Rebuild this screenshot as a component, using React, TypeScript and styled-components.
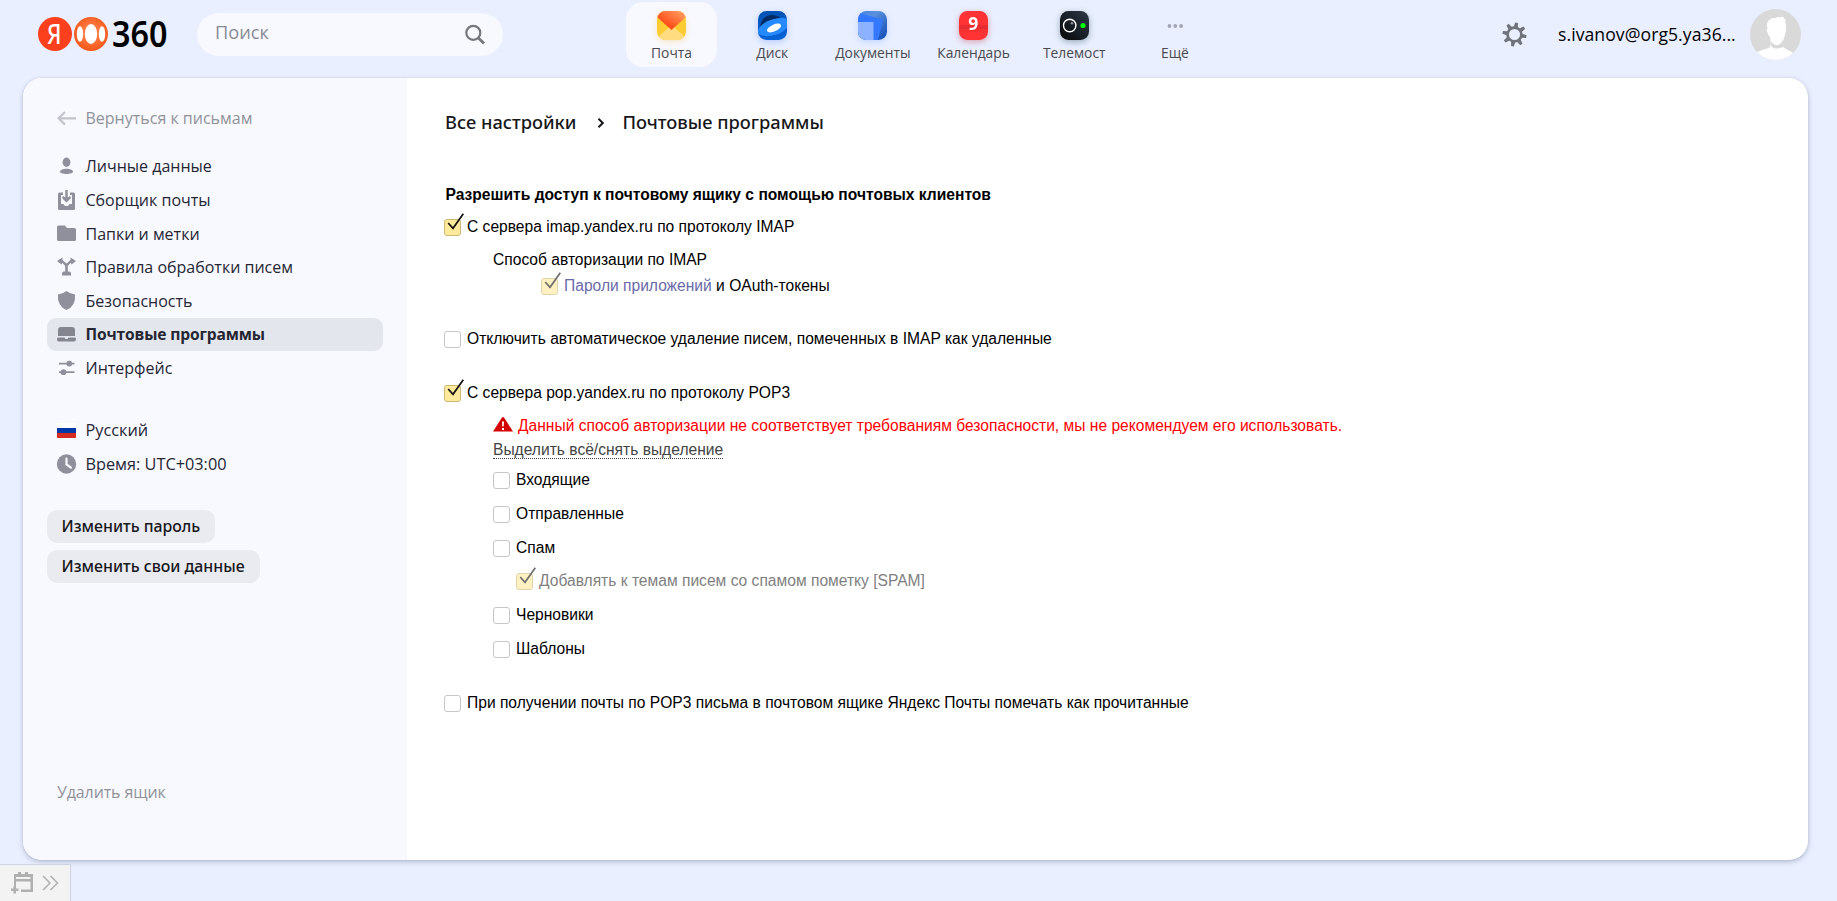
import React from 'react';
import styled, { createGlobalStyle, css } from 'styled-components';

const Global = createGlobalStyle`
  *, *::before, *::after { box-sizing: border-box; }
  html, body { margin: 0; padding: 0; background: #e9effe; }
  body { font-family: 'Open Sans', 'Noto Sans', sans-serif; color: #000; overflow: hidden; }
  svg { display: block; overflow: visible; flex: none; }
`;

const Page = styled.div`
  position: relative;
  height: 901px;
  width: 100%;
  display: flex;
  flex-direction: column;
`;

/* ---------- header ---------- */
const Header = styled.header`
  height: 78px;
  flex: none;
  display: flex;
  align-items: flex-start;
`;

const Logo = styled.div`
  display: flex;
  align-items: center;
  margin: 13px 0 0 38px;
  width: 159px;
  height: 42px;
`;

const SearchBox = styled.div`
  width: 306px;
  height: 43px;
  margin-top: 13px;
  padding: 0 18px 0 18px;
  border-radius: 22px;
  background: #f8f9ff;
  display: flex;
  align-items: center;
  justify-content: space-between;
  color: #8a8c95;
  font-size: 18.2px;
  line-height: 24px;
`;

const SearchHint = styled.span`
  margin-top: -5px;
`;

const Services = styled.nav`
  display: flex;
  gap: 9.7px;
  margin: 2px 0 0 123px;
`;

const Service = styled.a<{ $active?: boolean }>`
  width: 91px;
  height: 65px;
  padding-top: 8.5px;
  border-radius: 17px;
  display: flex;
  flex-direction: column;
  align-items: center;
  background: ${p => (p.$active ? '#f8f9ff' : 'transparent')};
  color: #4a4a4c;
  font-size: 13.8px;
  line-height: 18px;
  white-space: nowrap;
`;

const ServiceIcon = styled.span<{ $glow: string }>`
  height: 29px;
  margin-bottom: 4px;
  filter: drop-shadow(0 2px 3px ${p => p.$glow});
`;

const Account = styled.div`
  margin-left: auto;
  margin-right: 36px;
  height: 68px;
  display: flex;
  align-items: center;
`;

const Email = styled.span`
  margin: -1px 15px 0 31px;
  width: 177px;
  font-size: 17.6px;
  line-height: 24px;
  letter-spacing: 0.06px;
  white-space: nowrap;
`;

/* ---------- card ---------- */
const Card = styled.div`
  height: 782px;
  flex: none;
  margin: 0 29px 0 23px;
  border-radius: 19px;
  overflow: hidden;
  display: flex;
  background: #fff;
  box-shadow: 0 2px 5px rgba(60, 70, 110, 0.3), 0 0 2px rgba(60, 70, 110, 0.12);
`;

const Sidebar = styled.aside`
  width: 384px;
  flex: none;
  padding: 23.3px 24px 0;
  background: #f8f9ff;
  display: flex;
  flex-direction: column;
`;

const SideItem = styled.a<{ $active?: boolean; $muted?: boolean }>`
  height: 33.6px;
  flex: none;
  padding-left: 10px;
  display: flex;
  align-items: center;
  gap: 9.5px;
  border-radius: 9px;
  font-size: 16px;
  line-height: 20px;
  white-space: nowrap;
  color: ${p => (p.$muted ? '#919298' : '#262633')};
  ${p =>
    p.$active &&
    css`
      height: 33px;
      margin-bottom: 0.6px;
      background: #e3e6ed;
      font-weight: 700;
      letter-spacing: -0.01em;
      font-size: 15.6px;
    `}
`;

const SideGroup = styled.div<{ $gap: number }>`
  margin-top: ${p => p.$gap}px;
  display: flex;
  flex-direction: column;
`;

const Locale = styled(SideGroup)`
  font-size: 16.3px;

  ${SideItem} { font-size: inherit; }
`;

const Buttons = styled.div`
  margin-top: 29.3px;
  display: flex;
  flex-direction: column;
  align-items: flex-start;
  gap: 7px;
`;

const Button = styled.button`
  height: 33px;
  padding: 0 15px 0 14.5px;
  border: 0;
  border-radius: 10px;
  background: #eaebf1;
  color: #17171c;
  font: 500 15.9px/20px 'Noto Sans', sans-serif;
  white-space: nowrap;
`;

const SideFooter = styled.div`
  margin-top: auto;
  margin-bottom: 51px;
  letter-spacing: -0.12px;
`;

/* ---------- content ---------- */
const Content = styled.main`
  flex: 1;
  padding: 30px 0 0 37px;
  font: 15.6px/20px 'Liberation Sans', Arial, sans-serif;
`;

const Crumbs = styled.div`
  height: 28px;
  padding-left: 1px;
  display: flex;
  align-items: center;
  color: #17171a;
  font: 500 18.3px/28px 'Noto Sans', sans-serif;
  white-space: nowrap;

  svg { margin: 1px 17px 0 21px; }
`;

const Heading = styled.h2`
  margin: 49px 0 12px 1.5px;
  font-size: 15.6px;
  line-height: 20px;
  font-weight: 700;
`;

const Nested = styled.div<{ $top: number }>`
  margin: ${p => p.$top}px 0 0 49px;
  display: flex;
  flex-direction: column;
`;

const Line = styled.div<{ $top?: number; $indent?: number; $dim?: boolean; $alert?: boolean }>`
  height: 20px;
  margin-top: ${p => p.$top ?? 0}px;
  margin-left: ${p => p.$indent ?? 0}px;
  display: flex;
  align-items: flex-start;
  white-space: pre;
  color: ${p => (p.$alert ? '#f00' : p.$dim ? '#7f7f7f' : '#000')};
`;

const Box = styled.span<{ $on?: boolean; $faded?: boolean }>`
  position: relative;
  width: 17px;
  height: 17px;
  flex: none;
  margin: 2px 6px 0 0;
  border: 1px solid ${p => (p.$on ? '#cdb975' : '#c6c6c6')};
  border-radius: 3px;
  background: ${p => (p.$on ? '#ffe99a' : '#fff')};
  opacity: ${p => (p.$faded ? 0.6 : 1)};

  svg { position: absolute; left: 1px; top: -7px; }
`;

const Link = styled.a`
  color: #6a6aa8;
`;

const Toggle = styled.a`
  height: 19px;
  color: #444;
  border-bottom: 1px dotted #444;
`;

const Dock = styled.div`
  position: absolute;
  left: 0;
  bottom: 0;
  width: 71px;
  height: 37px;
  padding: 0 0 1px 11px;
  display: flex;
  align-items: center;
  gap: 9px;
  background: #f3f3f3;
  border-top: 1px solid #cfd3e4;
  border-right: 1px solid #cfd3e4;
`;

/* ---------- drawings ---------- */
const BrandMark = () => (
  <svg width="140" height="42" viewBox="0 0 140 42">
    <defs>
      <radialGradient id="ring" cx=".5" cy=".45" r=".55">
        <stop offset="0" stopColor="#ff8d5c" />
        <stop offset=".65" stopColor="#fb6a30" />
        <stop offset="1" stopColor="#f15718" />
      </radialGradient>
    </defs>
    <circle cx="17" cy="21" r="17" fill="#fc3f1d" />
    <text x="9" y="31" fontFamily="Noto Sans" fontSize="27" fontWeight="500" fill="#fff" textLength="14.5" lengthAdjust="spacingAndGlyphs">Я</text>
    <circle cx="53" cy="21" r="17" fill="url(#ring)" />
    <ellipse cx="53" cy="21" rx="6.2" ry="10" fill="#fff" />
    <ellipse cx="42" cy="21" rx="3.2" ry="7.8" fill="#fff" />
    <ellipse cx="64" cy="21" rx="3.2" ry="7.8" fill="#fff" />
    <text x="74" y="33.5" fontFamily="Noto Sans" fontSize="36" fontWeight="600" fill="#000" textLength="55.500" lengthAdjust="spacingAndGlyphs">360</text>
  </svg>
);

const Magnifier = () => (
  <svg width="20" height="20" viewBox="0 0 20 20" fill="none" stroke="#77787d" strokeWidth="2.2">
    <circle cx="8.3" cy="7.8" r="7" />
    <path d="M13.2 12.700 19 18.500" strokeWidth="2.8" />
  </svg>
);

const MailIcon = () => (
  <svg width="29" height="29" viewBox="0 0 29 29">
    <defs>
      <linearGradient id="flap" x1="0" y1="1" x2="1" y2="0">
        <stop offset=".3" stopColor="#ff4d1a" /><stop offset="1" stopColor="#ffa866" />
      </linearGradient>
      <clipPath id="tile"><rect width="29" height="29" rx="8.5" /></clipPath>
    </defs>
    <g clipPath="url(#tile)">
      <rect width="29" height="29" fill="#ffcc33" />
      <path d="M0 27 14.5 14 29 27V29H0Z" fill="#ffdc80" />
      <path d="M0 0H29V6L14.5 19 0 6Z" fill="url(#flap)" />
    </g>
  </svg>
);

const DiskIcon = () => (
  <svg width="29" height="29" viewBox="0 0 29 29">
    <defs>
      <linearGradient id="disk" x1="0" y1="0" x2="0" y2="1">
        <stop offset="0" stopColor="#0053b4" /><stop offset="1" stopColor="#0763d8" />
      </linearGradient>
    </defs>
    <g clipPath="url(#tile)">
      <rect width="29" height="29" fill="url(#disk)" />
      <path d="M2 15Q5 3 15 4Q23 5 25 10L10 14Z" fill="#002a63" />
      <path d="M-1 22Q2 12 14 8.500Q26 5 30 9V14Q28 21 17 24Q5 27 -1 22Z" fill="#2589ff" />
      <ellipse cx="16" cy="17" rx="7.6" ry="3.4" transform="rotate(-24 16 17)" fill="#fff" />
    </g>
  </svg>
);

const DocsIcon = () => (
  <svg width="29" height="29" viewBox="0 0 29 29">
    <defs>
      <linearGradient id="docs" x1="0" y1="0" x2="1" y2="1">
        <stop offset="0" stopColor="#4484e6" /><stop offset=".35" stopColor="#5b90dd" /><stop offset="1" stopColor="#0c48b4" />
      </linearGradient>
    </defs>
    <g clipPath="url(#tile)">
      <rect width="29" height="29" fill="url(#docs)" />
      <path d="M-1 1.500 25 8.500 20 29H-1Z" fill="#3478ff" />
      <rect y="11" width="15.500" height="18" fill="#8db2ff" />
    </g>
  </svg>
);

const CalendarIcon = () => (
  <svg width="29" height="29" viewBox="0 0 29 29">
    <g clipPath="url(#tile)">
      <rect width="29" height="29" fill="#ff3333" />
      <path d="M0 14H29V18H0Z" fill="#e22c30" opacity=".8" />
      <path d="M0 18H29V21H0Z" fill="#f03032" opacity=".6" />
    </g>
    <text x="14.300" y="18.600" fontFamily="Noto Sans" fontSize="17.500" fontWeight="700" fill="#fff" textAnchor="middle">9</text>
  </svg>
);

const TelemostIcon = () => (
  <svg width="29" height="29" viewBox="0 0 29 29">
    <defs>
      <linearGradient id="tele" x1="1" y1="0" x2="0" y2="1">
        <stop offset="0" stopColor="#2d3a48" /><stop offset="1" stopColor="#050608" />
      </linearGradient>
    </defs>
    <rect width="29" height="29" rx="8.5" fill="url(#tele)" />
    <circle cx="9.700" cy="14.500" r="6.200" fill="none" stroke="#fff" strokeWidth="1.400" />
    <circle cx="12" cy="12.200" r="1.300" fill="#8b9198" />
    <circle cx="23" cy="14.500" r="2.600" fill="#0f0" />
  </svg>
);

const DotsIcon = () => (
  <svg width="15" height="29" viewBox="0 0 15 29" fill="#a3a6b5">
    <circle cx="2.500" cy="15" r="1.900" /><circle cx="8.300" cy="15" r="1.900" /><circle cx="14.100" cy="15" r="1.900" />
  </svg>
);

const Gear = () => (
  <svg width="25" height="25" viewBox="-12.5 -12.5 25 25">
    <circle r="6.900" fill="none" stroke="#71737a" strokeWidth="2.700" />
    {[10, 55, 100, 145, 190, 235, 280, 325].map(a => (
      <path key={a} d="M-2.100 -7.500 -1.400 -12H1.400L2.100 -7.500Z" fill="#71737a" transform={`rotate(${a})`} />
    ))}
  </svg>
);

const Avatar = () => (
  <svg width="51" height="51" viewBox="0 0 51 51">
    <defs><clipPath id="face"><circle cx="25.500" cy="25.500" r="25.500" /></clipPath></defs>
    <g clipPath="url(#face)">
      <rect width="51" height="51" fill="#d9d9d9" />
      <path d="M5 44Q8 42 14 40.500Q20 39 20.300 37L20.300 28L35 28L33 38Q37 41 40 42Q43 43.500 45 46L40 54H8Z" fill="#fff" />
      <path d="M20.300 28V34.500Q21.500 40 27.500 39.500Q32 38.500 34 37.500L38 34V24Z" fill="#d9d9d9" />
      <path d="M17.500 20Q16 13.500 19 11Q22 8.500 25 9Q29 7.500 34 8L33.500 9.500L36 10.500L35 12.500Q36.500 15 35.700 19Q37 20 35.300 24Q34.500 31 31 34Q27 38 23 34.500L20.300 32V28.500Q18 26 17.500 23.500Q16 21 17.500 20Z" fill="#fff" />
    </g>
  </svg>
);

const icon = { width: 19, height: 20, viewBox: '0 0 19 20', fill: '#8f909b' };

const BackIcon = () => (
  <svg {...icon} fill="none" stroke="#c3c5cc" strokeWidth="2.200"><path d="M19 10.300H1.500M8 4 1.500 10.300 8 16.600" /></svg>
);
const PersonIcon = () => (
  <svg {...icon}><ellipse cx="9.500" cy="6.300" rx="3.900" ry="4.700" /><path d="M3 15.700C3 11.800 16 11.800 16 15.700 16 18.600 3 18.600 3 15.700Z" /></svg>
);
const CollectIcon = () => (
  <svg {...icon}>
    <path fillRule="evenodd" d="M2.500 2.500H6V5H4V14H6.500L8 16H11L12.500 14H15V5H13V2.500H16.500Q18 2.500 18 4V18.500Q18 20 16.500 20H2.500Q1 20 1 18.500V4Q1 2.500 2.500 2.500Z" />
    <path d="M8.300 0H10.700V7.500L13 6 14 8 9.500 12.500 5 8 6 6 8.300 7.500Z" />
  </svg>
);
const FolderIcon = () => (
  <svg {...icon}><path d="M1.500 1.500H8L10 4H17.500Q19 4 19 5.500V15.500Q19 17 17.500 17H1.500Q0 17 0 15.500V3Q0 1.500 1.500 1.500Z" /></svg>
);
const RulesIcon = () => (
  <svg {...icon}>
    <path d="M0 4 5.500 0.500V3L9.500 6.500 13.500 3V0.500L19 4 14.500 7.500 13.700 5.800 10.800 9V14.500H12.500Q14.500 15 14 18.500H5Q4.500 15 6.500 14.500H8.200V9L5.300 5.800 4.500 7.500Z" />
  </svg>
);
const ShieldIcon = () => (
  <svg {...icon}><path d="M9.500 0Q13 3 18 3.500 19 15 9.500 19 0 15 1 3.500 6 3 9.500 0Z" /></svg>
);
const ClientIcon = () => (
  <svg {...icon} fill="#84858f">
    <path d="M4 3H15Q18 3 18 6V12H1V6Q1 3 4 3Z" />
    <path d="M1 13.500H7.500L8.500 15H10.500L11.500 13.500H18Q19 13.500 19 15 19 17.500 17 17.500H2Q0 17.500 0 15 0 13.500 1 13.500Z" />
  </svg>
);
const SlidersIcon = () => (
  <svg {...icon}>
    <path d="M2 4.700H17.500V6.500H2ZM2 13.300H17.500V15.100H2Z" /><circle cx="12.300" cy="5.600" r="2.900" /><circle cx="6.500" cy="14.200" r="2.900" />
  </svg>
);
const FlagIcon = () => (
  <svg {...icon}>
    <path d="M1 3H18L19 4V8H0V4Z" fill="#fff" /><path d="M0 8H19V13H0Z" fill="#0039a6" /><path d="M0 13H19V17Q19 18 18 18H1Q0 18 0 17Z" fill="#d52b1e" />
  </svg>
);
const ClockIcon = () => (
  <svg {...icon}>
    <circle cx="9.500" cy="10" r="9.700" /><path d="M9.500 4.500V10.500L14 13.700" fill="none" stroke="#f8f9ff" strokeWidth="2.200" strokeLinecap="round" />
  </svg>
);

const Tick = () => (
  <svg width="18" height="18" viewBox="0 0 18 18" fill="none" stroke="#111" strokeWidth="1.700">
    <path d="M2.200 10 7 15.300 17.300 .800" />
  </svg>
);

const Warning = () => (
  <svg width="20" height="15" viewBox="0 0 20 15">
    <path d="M9 .500Q10 -.500 11 .500L20 14.500H0Z" fill="#d40000" />
    <path d="M9 4.500H11L10.700 9.500H9.300ZM9 11H11V13H9Z" fill="#fff" />
  </svg>
);

const WarnSlot = styled.span`
  margin: 1px 5px 0 0;
`;

const AddEvent = () => (
  <svg width="22" height="22" viewBox="0 0 22 22" fill="#b0b0b0">
    <path d="M3 2H7V0H10V2H14V0H17V2H22V20H10V17.500H19.500V9.500H5V14H3ZM5 5V7H19.500V5Z" fillRule="evenodd" />
    <path d="M2.500 14H5V16.500H7.500V19H5V21.500H2.500V19H0V16.500H2.500Z" />
  </svg>
);

const Chevrons = () => (
  <svg width="17" height="16" viewBox="0 0 17 16" fill="none" stroke="#b0b0b0" strokeWidth="1.500">
    <path d="M1 1 8 8 1 15M8.500 1 15.500 8 8.500 15" />
  </svg>
);

/* ---------- data ---------- */
const services = [
  { label: 'Почта', glow: 'rgba(255,190,60,.3)', Icon: MailIcon },
  { label: 'Диск', glow: 'rgba(40,90,255,.25)', Icon: DiskIcon },
  { label: 'Документы', glow: 'rgba(40,110,255,.2)', Icon: DocsIcon },
  { label: 'Календарь', glow: 'rgba(190,20,40,.35)', Icon: CalendarIcon },
  { label: 'Телемост', glow: 'rgba(0,40,60,.35)', Icon: TelemostIcon },
  { label: 'Ещё', glow: 'transparent', Icon: DotsIcon },
];

const sections = [
  { label: 'Личные данные', Icon: PersonIcon },
  { label: 'Сборщик почты', Icon: CollectIcon },
  { label: 'Папки и метки', Icon: FolderIcon },
  { label: 'Правила обработки писем', Icon: RulesIcon },
  { label: 'Безопасность', Icon: ShieldIcon },
  { label: 'Почтовые программы', Icon: ClientIcon },
  { label: 'Интерфейс', Icon: SlidersIcon },
];

type CheckProps = { top?: number; indent?: number; on?: boolean; faded?: boolean; dim?: boolean; children: React.ReactNode };

const Check = ({ top, indent, on, faded, dim, children }: CheckProps) => (
  <Line $top={top} $indent={indent} $dim={dim}>
    <Box $on={on} $faded={faded}>{on && <Tick />}</Box>
    {children}
  </Line>
);

export default function App() {
  return (
    <Page>
      <Global />
      <Header>
        <Logo><BrandMark /></Logo>
        <SearchBox><SearchHint>Поиск</SearchHint><Magnifier /></SearchBox>
        <Services>
          {services.map(({ label, glow, Icon }, i) => (
            <Service key={label} $active={i === 0}>
              <ServiceIcon $glow={glow}><Icon /></ServiceIcon>
              {label}
            </Service>
          ))}
        </Services>
        <Account>
          <Gear />
          <Email>s.ivanov@org5.ya36...</Email>
          <Avatar />
        </Account>
      </Header>

      <Card>
        <Sidebar>
          <SideItem $muted><BackIcon />Вернуться к письмам</SideItem>
          <SideGroup $gap={14.8}>
            {sections.map(({ label, Icon }) => (
              <SideItem key={label} $active={label === 'Почтовые программы'}><Icon />{label}</SideItem>
            ))}
          </SideGroup>
          <Locale $gap={28.5}>
            <SideItem><FlagIcon />Русский</SideItem>
            <SideItem><ClockIcon />Время: UTC+03:00</SideItem>
          </Locale>
          <Buttons>
            <Button>Изменить пароль</Button>
            <Button>Изменить свои данные</Button>
          </Buttons>
          <SideFooter><SideItem $muted>Удалить ящик</SideItem></SideFooter>
        </Sidebar>

        <Content>
          <Crumbs>
            Все настройки
            <svg width="8" height="10" viewBox="0 0 8 10" fill="none" stroke="#17171a" strokeWidth="2"><path d="M1.500 .800 5.800 5 1.500 9.200" /></svg>
            Почтовые программы
          </Crumbs>
          <Heading>Разрешить доступ к почтовому ящику с помощью почтовых клиентов</Heading>

          <Check on>С сервера imap.yandex.ru по протоколу IMAP</Check>
          <Nested $top={13}>
            <Line>Способ авторизации по IMAP</Line>
            <Check top={6} indent={48} on faded><Link>Пароли приложений</Link> и OAuth-токены</Check>
          </Nested>
          <Check top={33}>Отключить автоматическое удаление писем, помеченных в IMAP как удаленные</Check>

          <Check top={34} on>С сервера pop.yandex.ru по протоколу POP3</Check>
          <Nested $top={13}>
            <Line $alert><WarnSlot><Warning /></WarnSlot>Данный способ авторизации не соответствует требованиям безопасности, мы не рекомендуем его использовать.</Line>
            <Line $top={4}><Toggle>Выделить всё/снять выделение</Toggle></Line>
            <Check top={10}>Входящие</Check>
            <Check top={14}>Отправленные</Check>
            <Check top={14}>Спам</Check>
            <Check top={13} indent={23} on faded dim>Добавлять к темам писем со спамом пометку [SPAM]</Check>
            <Check top={14}>Черновики</Check>
            <Check top={14}>Шаблоны</Check>
          </Nested>
          <Check top={34}>При получении почты по POP3 письма в почтовом ящике Яндекс Почты помечать как прочитанные</Check>
        </Content>
      </Card>

      <Dock><AddEvent /><Chevrons /></Dock>
    </Page>
  );
}
